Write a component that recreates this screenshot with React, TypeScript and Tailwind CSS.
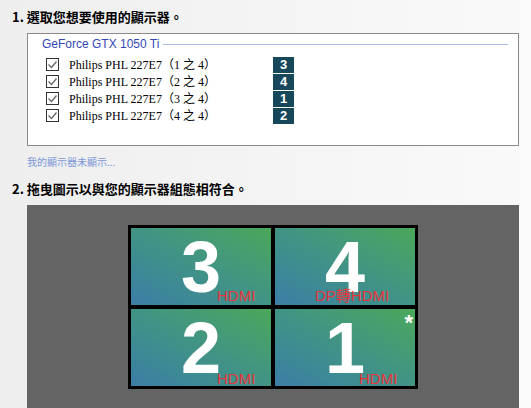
const CJK = "font-['Noto_Sans_CJK_TC',sans-serif]";

const monitors = [
  { label: "Philips PHL 227E7（1 之 4）", badge: "3" },
  { label: "Philips PHL 227E7（2 之 4）", badge: "4" },
  { label: "Philips PHL 227E7（3 之 4）", badge: "1" },
  { label: "Philips PHL 227E7（4 之 4）", badge: "2" },
];

function CheckBox() {
  return (
    <span className="flex h-[13px] w-[13px] items-center justify-center border border-[#333] bg-white">
      <svg width="11" height="11" viewBox="0 0 11 11">
        <polyline points="1.5,5.5 4.5,8.5 9.5,2.5" fill="none" stroke="#666" strokeWidth="1.3" />
      </svg>
    </span>
  );
}

function Cell({
  num,
  label,
  labelPos,
  star,
}: {
  num: string;
  label: string;
  labelPos: string;
  star?: boolean;
}) {
  return (
    <div className="relative flex h-[77px] w-[140px] items-center justify-center bg-linear-to-tr from-[#3c7da6] to-[#4ba758]">
      <span className="font-['Liberation_Sans',sans-serif] text-[72px] font-bold leading-none text-white">
        {num}
      </span>
      <span
        className={`absolute font-['Liberation_Sans','Noto_Sans_CJK_TC',sans-serif] text-[15px] leading-none text-[#e8353c] ${labelPos}`}
      >
        {label}
      </span>
      {star && (
        <span className="absolute right-[2px] top-[3px] font-['Liberation_Sans',sans-serif] text-[22px] font-bold leading-none text-white">
          *
        </span>
      )}
    </div>
  );
}

export default function App() {
  return (
    <div className="flex h-[408px] w-[531px] flex-col overflow-hidden bg-linear-to-r from-[#eeeeee] to-[#fafafa]">
      <h1 className={`pl-[12px] pt-[9px] text-[13px] font-bold leading-[16px] text-black ${CJK}`}>
        1. 選取您想要使用的顯示器。
      </h1>

      {/* monitor list box */}
      <div className="ml-[27px] mt-[8px] h-[113px] w-[492px] shrink-0 border border-[#8a8a8a] bg-white">
        <div className="flex items-center pl-[14px] pr-[10px] pt-[3px]">
          <span className="font-['Liberation_Sans',sans-serif] text-[12px] leading-[14px] text-[#3347b5]">
            GeForce GTX 1050 Ti
          </span>
          <span className="ml-[4px] h-px flex-1 bg-[#aabbe3]" />
        </div>
        <div className="mt-[5px] flex flex-col pl-[18px]">
          {monitors.map((m) => (
            <div key={m.badge} className="flex h-[17px] items-center">
              <CheckBox />
              <span className="ml-[10px] w-[204px] font-['Liberation_Serif','Noto_Sans_CJK_TC',serif] text-[12px] leading-none text-black">
                {m.label}
              </span>
              <span className="flex h-[16px] w-[21px] items-center justify-center bg-[#17475a] font-['Liberation_Sans',sans-serif] text-[13px] font-bold leading-none text-white">
                {m.badge}
              </span>
            </div>
          ))}
        </div>
      </div>

      <div className={`ml-[27px] mt-[10px] text-[10px] leading-[12px] text-[#7d98d8] ${CJK}`}>
        我的顯示器未顯示...
      </div>

      <h2 className={`mt-[13px] pl-[12px] text-[13px] font-bold leading-[16px] text-black ${CJK}`}>
        2. 拖曳圖示以與您的顯示器組態相符合。
      </h2>

      {/* arrangement canvas */}
      <div className="ml-[27px] mt-[8px] flex w-[492px] flex-1 justify-center bg-[#646464] pt-[20px]">
        <div className="grid h-fit grid-cols-2 gap-[4px] bg-black p-[3px]">
          <Cell num="3" label="HDMI" labelPos="left-[86px] top-[60px]" />
          <Cell num="4" label="DP轉HDMI" labelPos="left-[40px] top-[60px]" />
          <Cell num="2" label="HDMI" labelPos="left-[86px] top-[62px]" />
          <Cell num="1" label="HDMI" labelPos="left-[84px] top-[62px]" star />
        </div>
      </div>
    </div>
  );
}
